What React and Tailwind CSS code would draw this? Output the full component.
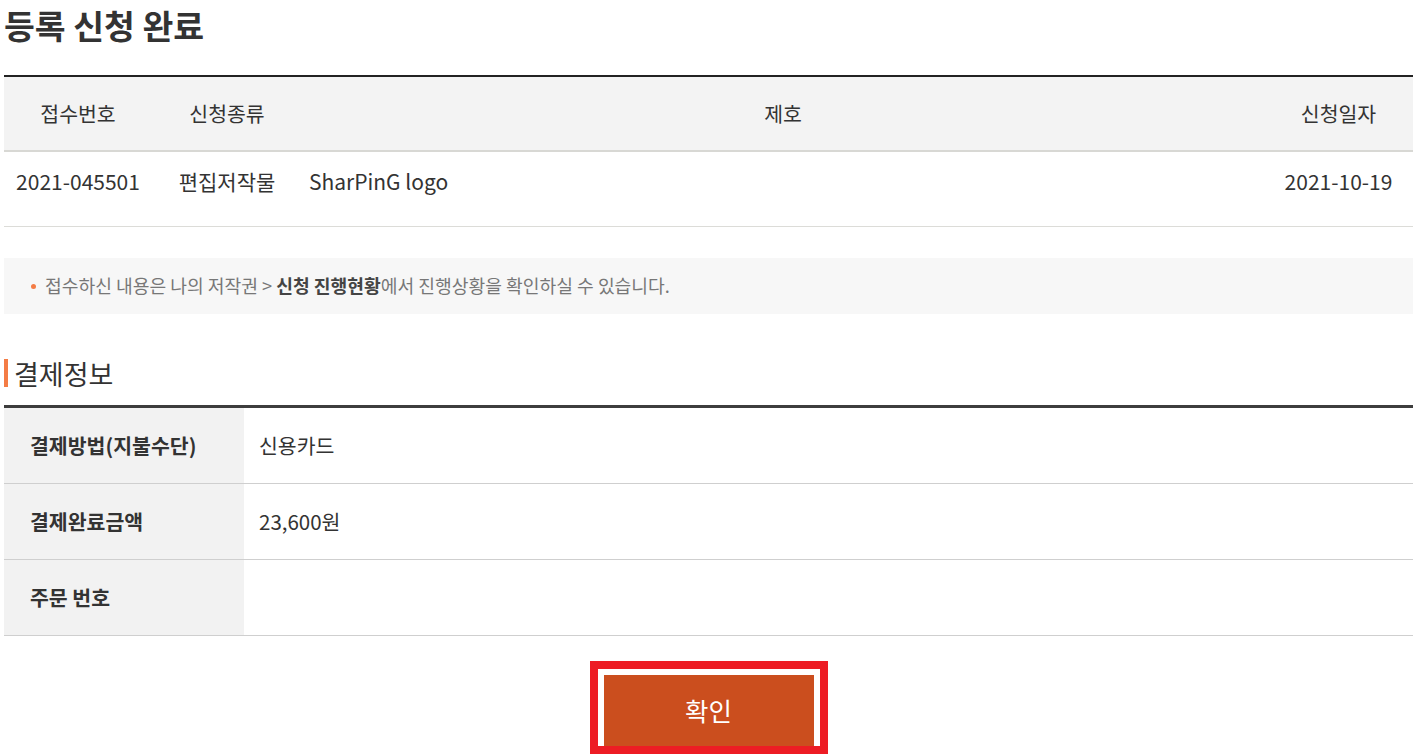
export default function App() {
  const font = { fontFamily: '"Noto Sans CJK KR", "Noto Sans", sans-serif' };

  const payRows = [
    { label: "결제방법(지불수단)", value: "신용카드" },
    { label: "결제완료금액", value: "23,600원" },
    { label: "주문 번호", value: "" },
  ];

  return (
    <div className="min-h-screen bg-white pl-[4px] pr-[7px] text-[#333]" style={font}>
      {/* Title */}
      <h1 className="text-[33.5px] font-bold leading-[50px]">등록 신청 완료</h1>

      {/* Application table */}
      <div className="mt-[25px] border-t-2 border-[#222]">
        <div className="flex h-[75px] items-center border-b-2 border-[#d8d8d4] bg-[#f3f3f3] text-[20.5px]">
          <div className="w-[148px] text-center">접수번호</div>
          <div className="w-[150px] text-center">신청종류</div>
          <div className="flex-1 text-center">제호</div>
          <div className="w-[149px] text-center">신청일자</div>
        </div>
        <div className="flex h-[75px] items-start border-b border-[#dcdcd8] pt-[13px] text-[21px] leading-[32px]">
          <div className="w-[148px] text-center">2021-045501</div>
          <div className="w-[150px] text-center">편집저작물</div>
          <div className="flex-1 pl-[7px]">SharPinG logo</div>
          <div className="w-[149px] text-center">2021-10-19</div>
        </div>
      </div>

      {/* Notice */}
      <div className="mt-[31px] flex h-[56px] items-center bg-[#f7f7f7] pl-[27px] text-[18.2px] text-[#777]">
        <span className="mr-[9px] inline-block h-[5px] w-[5px] rounded-full bg-[#f47c45]" />
        <span>
          접수하신 내용은 나의 저작권 &gt; <b className="font-bold text-[#444]">신청 진행현황</b>에서 진행상황을 확인하실 수 있습니다.
        </span>
      </div>

      {/* Payment info */}
      <div className="mt-[45px] flex h-[28px] items-center">
        <span className="h-[28px] w-[4px] bg-[#f47c45]" />
        <h2 className="ml-[6px] text-[27px] leading-none">결제정보</h2>
      </div>

      <div className="mt-[18px] border-t-[3px] border-[#3d3d3d]">
        {payRows.map((row) => (
          <div key={row.label} className="flex h-[76px] border-b border-[#cfcfcf] text-[20.5px]">
            <div className="flex w-[240px] items-center bg-[#f2f2f2] pl-[26px] font-bold">{row.label}</div>
            <div className="flex flex-1 items-center pl-[15px]">{row.value}</div>
          </div>
        ))}
      </div>

      {/* Confirm */}
      <div className="mt-[25px] flex justify-center">
        <div className="border-8 border-[#ed1c24] px-[6px] pt-[6px]">
          <button className="flex h-[71px] w-[210px] items-center justify-center bg-[#cb4e1e] text-[25.5px] text-white">
            확인
          </button>
        </div>
      </div>
    </div>
  );
}
